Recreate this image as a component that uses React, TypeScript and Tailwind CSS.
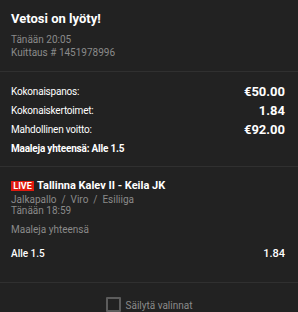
export default function App() {
  return (
    <div className="w-[298px] h-[312px] overflow-hidden bg-[#222222] text-white font-['Roboto',sans-serif]">
      <div className="px-[11px] pt-[10px] pb-[12px]">
        <h2 className="text-[13px] font-bold leading-[17px]">Vetosi on lyöty!</h2>
        <div className="mt-[6px] text-[10px] leading-[13px] text-[#8a8a8a]">Tänään 20:05</div>
        <div className="text-[10px] leading-[13px] text-[#8a8a8a]">Kuittaus # 1451978996</div>
      </div>
      <div className="h-px bg-[#303030]" />
      <div className="px-[11px] pr-[13px] pt-[10px] pb-[8px]">
        <div className="flex items-center justify-between h-[19px] leading-[19px]">
          <span className="text-[10px] tracking-[-0.2px]">Kokonaispanos:</span>
          <span className="text-[13px] font-bold">€50.00</span>
        </div>
        <div className="flex items-center justify-between h-[19px] leading-[19px]">
          <span className="text-[10px] tracking-[-0.2px]">Kokonaiskertoimet:</span>
          <span className="text-[13px] font-bold">1.84</span>
        </div>
        <div className="flex items-center justify-between h-[19px] leading-[19px]">
          <span className="text-[10px] tracking-[-0.2px]">Mahdollinen voitto:</span>
          <span className="text-[13px] font-bold">€92.00</span>
        </div>
        <div className="h-[19px] leading-[19px] text-[10px] font-bold tracking-[-0.2px]">Maaleja yhteensä: Alle 1.5</div>
      </div>
      <div className="h-px bg-[#303030]" />
      <div className="px-[11px] pr-[13px] pt-[10px] pb-[22px]">
        <div className="flex items-center gap-[3px] h-[17px]">
          <span className="flex items-center justify-center w-[23px] h-[10px] bg-[#e01a0f] text-white text-[9px] font-bold leading-[10px]">LIVE</span>
          <span className="text-[11px] font-bold leading-[17px]">Tallinna Kalev II - Keila JK</span>
        </div>
        <div className="text-[10px] leading-[11px] text-[#8a8a8a]">Jalkapallo&nbsp; /&nbsp; Viro&nbsp; /&nbsp; Esiliiga</div>
        <div className="text-[10px] leading-[11px] text-[#8a8a8a]">Tänään 18:59</div>
        <div className="mt-[7px] text-[10px] leading-[13px] text-[#8a8a8a]">Maaleja yhteensä</div>
        <div className="flex items-center justify-between mt-[11px] h-[13px] leading-[13px] font-medium">
          <span className="text-[10px]">Alle 1.5</span>
          <span className="text-[11px]">1.84</span>
        </div>
      </div>
      <div className="h-px bg-[#303030]" />
      <div className="flex items-start justify-center gap-[5px] pt-[14px]">
        <span className="shrink-0 w-[15px] h-[15px] border-2 border-[#5c5c5c] rounded-[1px]" />
        <span className="text-[10px] leading-[16px] pt-[1px] text-[#8a8a8a]">Säilytä valinnat</span>
      </div>
    </div>
  );
}
